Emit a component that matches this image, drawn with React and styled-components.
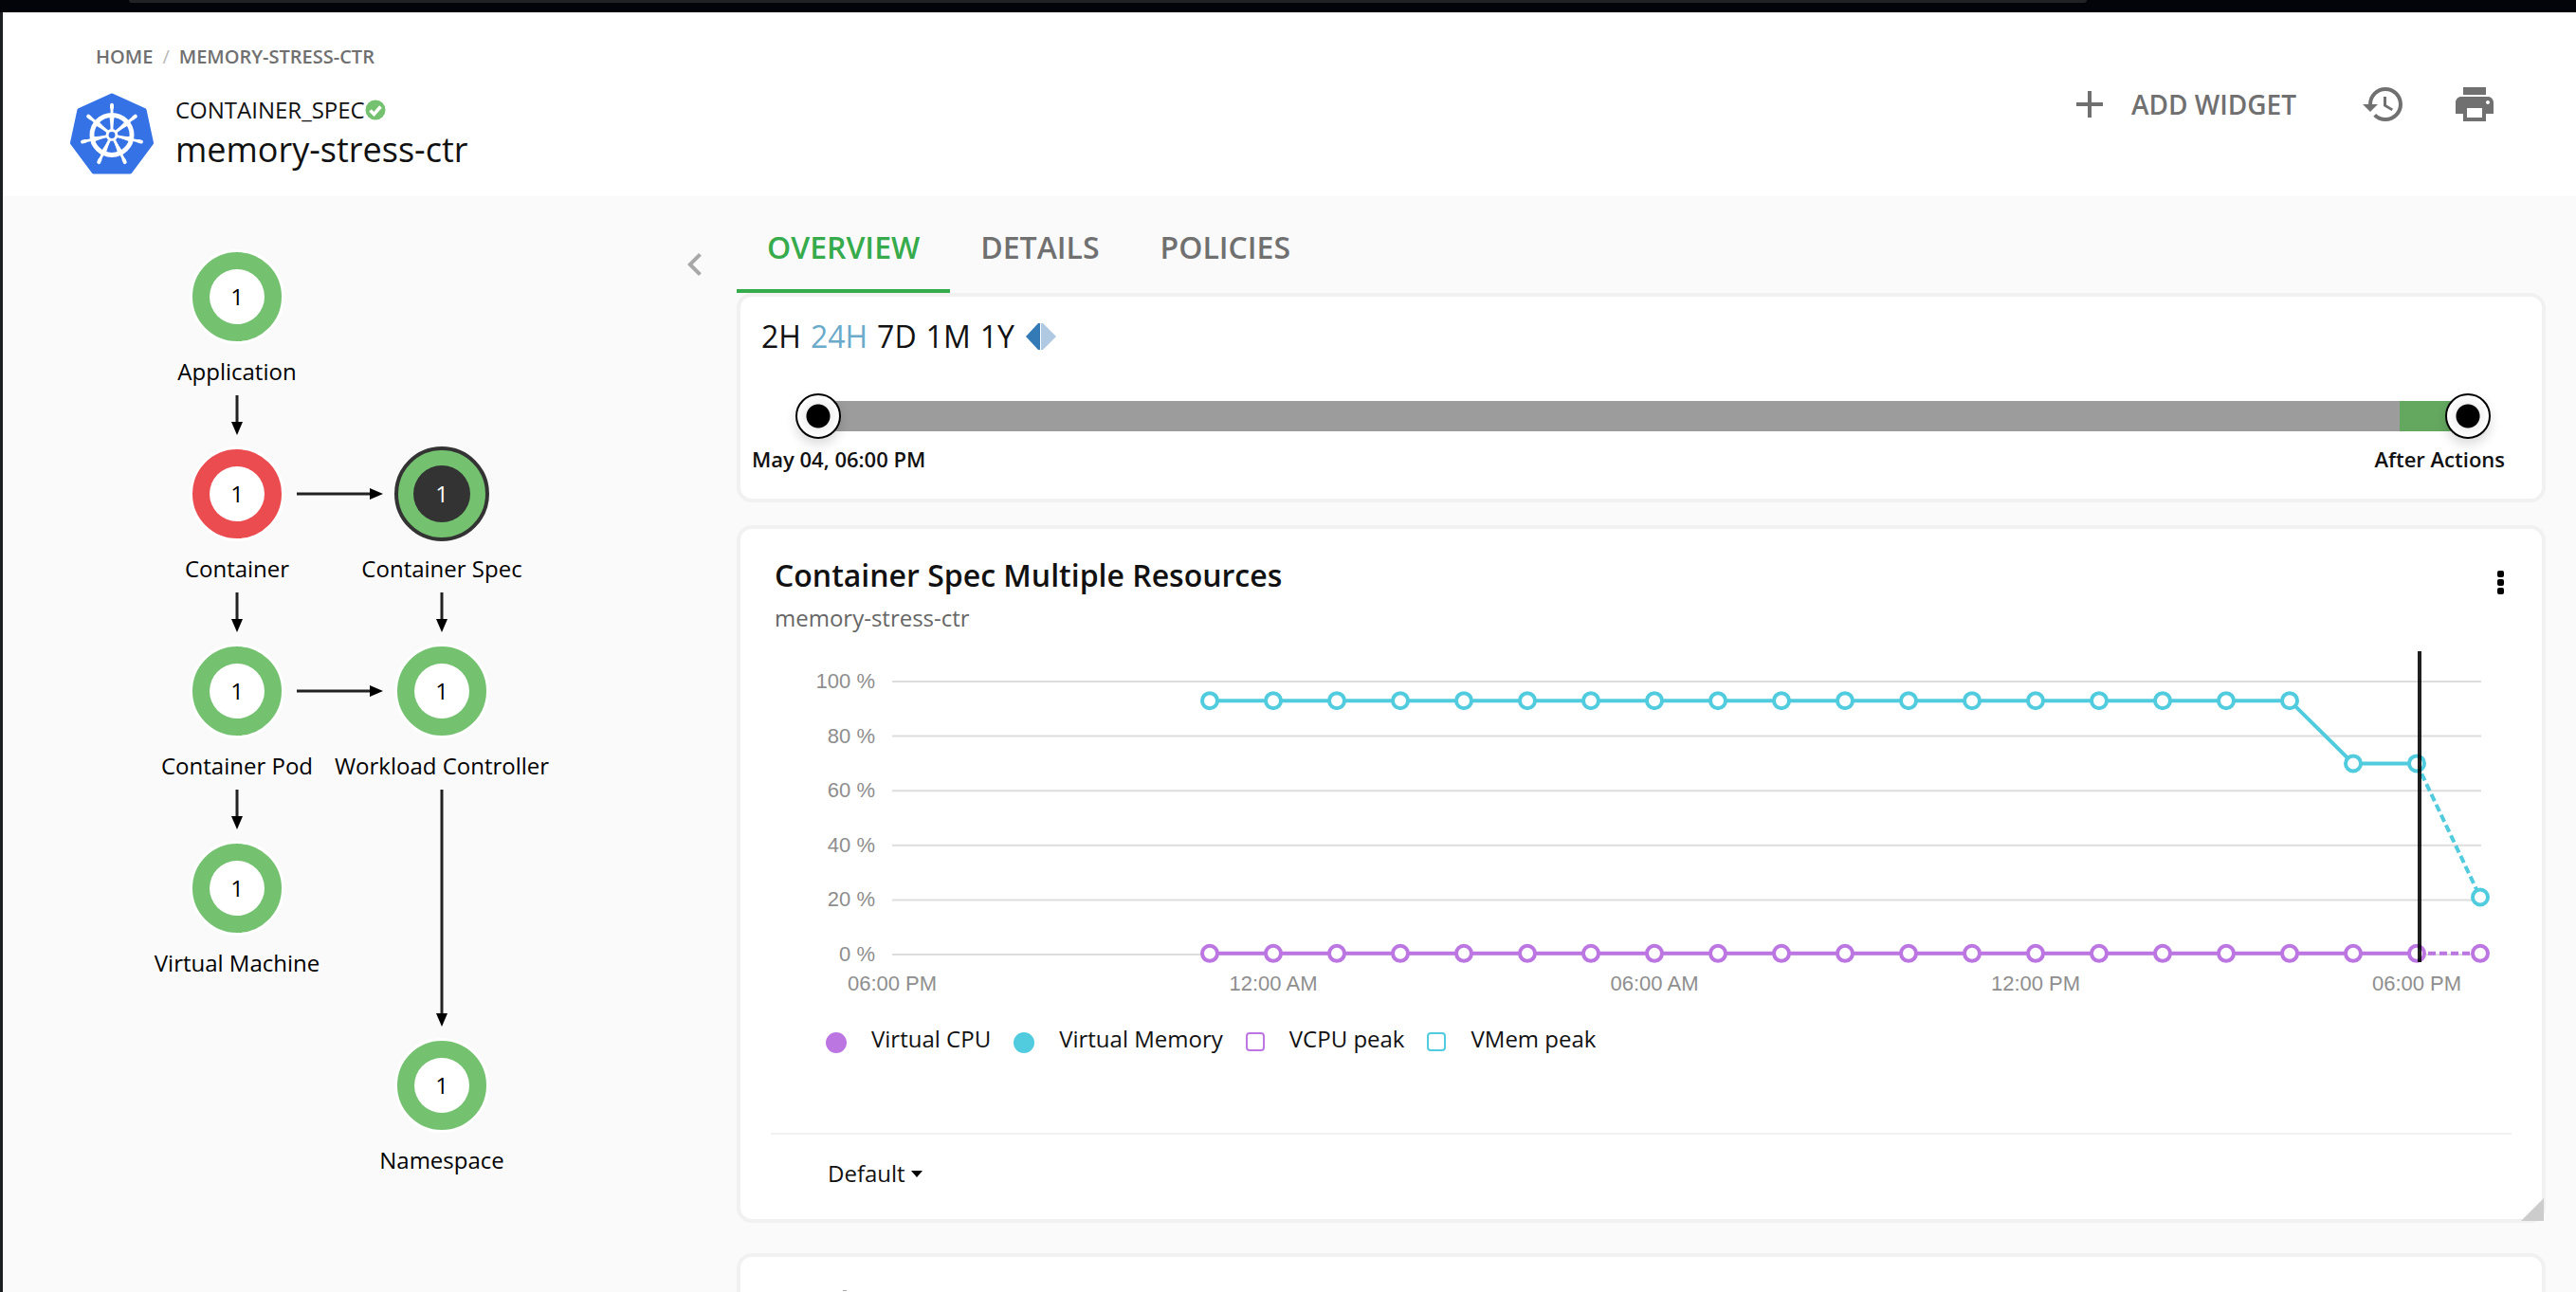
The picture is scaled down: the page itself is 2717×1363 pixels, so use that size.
import React, { useState } from "react";
import styled, { createGlobalStyle, css } from "styled-components";
import { MdAdd, MdHistory, MdPrint, MdChevronLeft } from "react-icons/md";

const color = {
  ink: "#111111",
  muted: "#707070",
  green: "#36ab4c",
  ring: "#74c170",
  red: "#ea4c50",
  dark: "#333333",
  line: "#f1f1f1",
  page: "#fafafa",
  cyan: "#51cbde",
  purple: "#bc76e2",
};

const GlobalStyle = createGlobalStyle`
  *, *::before, *::after { box-sizing: border-box; }
  body { margin: 0; background: ${color.page}; }
  body, button, select { font-family: "Open Sans", "Noto Sans", sans-serif; color: ${color.ink}; }
  button { background: none; border: 0; padding: 0; margin: 0; cursor: pointer; }
  h1, h2, p, ul, ol { margin: 0; padding: 0; }
  ul, ol { list-style: none; }
`;

const Page = styled.div`
  display: flex;
  flex-direction: column;
  height: 100vh;
  overflow: hidden;
`;

const WindowEdge = styled.div`
  flex: none;
  height: 13px;
  padding: 0 19% 0 5%;
  background: #02040a;

  &::before {
    content: "";
    display: block;
    height: 3px;
    border-radius: 0 0 12px 12px;
    background: #202226;
  }
`;

const Shell = styled.div`
  flex: 1;
  min-height: 0;
  display: flex;
  flex-direction: column;
  border-left: 3px solid #1d1e21;
`;

const Header = styled.header`
  flex: none;
  display: flex;
  justify-content: space-between;
  align-items: center;
  padding: 33px 83px 22px 71px;
  background: #ffffff;
`;

const Crumbs = styled.ol`
  display: flex;
  gap: 10px;
  padding-left: 27px;
  margin-bottom: 23px;
  font-size: 20px;
  line-height: 28px;
  font-weight: 600;
  color: #b8b8b8;

  a {
    color: ${color.muted};
    text-decoration: none;
  }
`;

const Slash = styled.li`
  font-weight: 400;
`;

const Identity = styled.div`
  display: flex;
  align-items: center;
  gap: 23px;
`;

const EntityType = styled.p`
  display: flex;
  align-items: center;
  margin-bottom: 2px;
  font-size: 24px;
  line-height: 32px;
`;

const EntityName = styled.h1`
  font-size: 36px;
  line-height: 48px;
  font-weight: 400;
`;

const Actions = styled.div`
  display: flex;
  align-items: center;
  gap: 48px;
  margin-bottom: 12px;
`;

const ActionButton = styled.button`
  display: flex;
  align-items: center;
  gap: 20px;
  margin-right: ${(p) => (p.$wide ? "20px" : 0)};
  color: ${color.muted};
  font-size: 28px;
  line-height: 38px;
  font-weight: 600;
`;

const Body = styled.div`
  flex: 1;
  min-height: 0;
  display: flex;
  background: ${color.page};
`;

const Sidebar = styled.aside`
  flex: none;
  width: 774px;
  display: flex;
  justify-content: space-between;
  align-items: flex-start;
  padding-right: 20px;
`;

const Collapse = styled.button`
  margin-top: 48px;
  color: #a8a8a8;
  line-height: 0;
`;

const Diagram = styled.div`
  position: relative;
  width: 600px;
  height: 1100px;
`;

const Node = styled.button`
  position: absolute;
  left: ${(p) => p.$x - 120}px;
  top: ${(p) => p.$y - 50}px;
  width: 240px;
  display: flex;
  flex-direction: column;
  align-items: center;
  gap: 13px;
  font-size: 24px;
  line-height: 32px;
  color: #000000;
`;

const Ring = styled.span`
  width: 100px;
  height: 100px;
  display: grid;
  place-items: center;
  border: 3px solid #ffffff;
  border-radius: 50%;
  background: ${(p) => p.$color};

  &::before,
  & > span {
    grid-area: 1 / 1;
  }
  &::before {
    content: "";
    width: 58px;
    height: 58px;
    border-radius: 50%;
    background: #ffffff;
  }
  ${(p) =>
    p.$selected &&
    css`
      border: 4px solid ${color.dark};
      color: #ffffff;
      &::before {
        width: 60px;
        height: 60px;
        background: ${color.dark};
      }
    `}
`;

const Main = styled.main`
  flex: 1;
  min-width: 0;
  display: flex;
  flex-direction: column;
  padding-right: 32px;
`;

const Tabs = styled.div`
  flex: none;
  display: flex;
  padding-top: 32px;
`;

const Tab = styled.button`
  padding: 0 32px 22px;
  font-size: 32px;
  line-height: 44px;
  font-weight: 600;
  color: ${(p) => (p.$active ? color.green : color.muted)};
  border-bottom: 4px solid ${(p) => (p.$active ? color.green : "transparent")};
`;

const Card = styled.section`
  position: relative;
  flex: none;
  margin-bottom: ${(p) => p.$gap}px;
  border: 4px solid ${color.line};
  border-radius: 16px;
  background: #ffffff;
`;

const TimeCard = styled(Card)`
  padding: 20px 20px 27px;
`;

const Ranges = styled.div`
  display: flex;
  align-items: center;
  gap: 10px;
  padding-left: 2px;
  margin-bottom: 38px;
`;

const RangeButton = styled.button`
  font-size: 32px;
  line-height: 44px;
  color: ${(p) => (p.$active ? "#6aaacb" : color.ink)};
`;

const DiamondButton = styled.button`
  margin-left: 2px;
  line-height: 0;
`;

const SliderBox = styled.div`
  display: grid;
  align-items: center;
  margin: 0 34px 6px 38px;
`;

const Track = styled.div`
  grid-area: 1 / 1;
  display: flex;
  height: 32px;
  margin: 0 24px;
`;

const Segment = styled.span`
  flex: ${(p) => p.$hours};
  background: ${(p) => p.$color};
`;

const Thumb = styled.input`
  grid-area: 1 / 1;
  appearance: none;
  width: 100%;
  height: 48px;
  margin: 0;
  background: transparent;
  pointer-events: none;

  &::-webkit-slider-thumb {
    appearance: none;
    pointer-events: auto;
    width: 48px;
    height: 48px;
    border: 2px solid #000000;
    border-radius: 50%;
    background: radial-gradient(circle, #000000 12px, #f2f2f2 13px, #ffffff 22px);
    box-shadow: 0 6px 12px rgba(0, 0, 0, 0.14);
  }
`;

const SliderLabels = styled.div`
  display: flex;
  justify-content: space-between;
  margin: 0 19px 0 -8px;
  font-size: 22px;
  line-height: 30px;
  font-weight: 600;
`;

const ChartCard = styled(Card)`
  padding: 27px 32px 32px;
`;

const CardHead = styled.div`
  display: flex;
  justify-content: space-between;
  align-items: flex-start;
  margin-bottom: 8px;
  padding-left: 4px;
`;

const Title = styled.h2`
  margin-bottom: 7px;
  font-size: 32px;
  line-height: 44px;
  font-weight: 600;
`;

const Subtitle = styled.p`
  font-size: 24px;
  line-height: 32px;
  color: #666666;
`;

const Kebab = styled.button`
  display: flex;
  flex-direction: column;
  align-items: center;
  gap: 2px;
  width: 24px;
  margin-top: 17px;

  span {
    width: 7px;
    height: 7px;
    border-radius: 2px;
    background: #000000;
  }
`;

const Plot = styled.svg`
  display: block;
  width: 100%;
  height: auto;

  text {
    font-family: "Liberation Sans", Arial, sans-serif;
    font-size: 22px;
    fill: #8e8e8e;
  }
`;

const Legend = styled.ul`
  display: flex;
  gap: 24px;
  padding: 24px 0 83px 58px;
  font-size: 24px;
  line-height: 32px;
  border-bottom: 2px solid ${color.line};
`;

const LegendItem = styled.li`
  display: flex;
  align-items: flex-start;
  gap: 26px;

  &::before {
    content: "";
    width: ${(p) => (p.$outline ? 20 : 22)}px;
    height: ${(p) => (p.$outline ? 20 : 22)}px;
    margin-top: 9px;
    border: 2px solid ${(p) => p.$color};
    border-radius: ${(p) => (p.$outline ? "4px" : "50%")};
    background: ${(p) => (p.$outline ? "transparent" : p.$color)};
  }
`;

const Footer = styled.div`
  display: flex;
  align-items: center;
  gap: 6px;
  padding: 25px 0 0 60px;
`;

const Picker = styled.select`
  appearance: none;
  field-sizing: content;
  padding: 0;
  border: 0;
  background: none;
  font-size: 24px;
  line-height: 32px;
`;

const Corner = styled.span`
  position: absolute;
  right: -2px;
  bottom: -2px;
  width: 24px;
  height: 24px;
  background: #cccccc;
  clip-path: polygon(100% 0, 100% 100%, 0 100%);
`;

const NextCard = styled(Card)`
  flex: 1 0 36px;
  padding: 35px 108px 0;
  border-bottom: 0;
  border-radius: 16px 16px 0 0;

  &::before {
    content: "";
    display: block;
    width: 4px;
    height: 1px;
    background: #a8a8a8;
  }
`;

const KubernetesLogo = () => {
  const spokes = Array.from({ length: 7 }, (_, i) => (i * 360) / 7);
  return (
    <svg width="88" height="88" viewBox="0 0 90 88" aria-hidden="true">
      <path
        d="M45 3 80 19 87.500 54 64.500 85H25.500L2.500 54 10 19Z"
        fill="#3572e6"
        stroke="#3572e6"
        strokeWidth="5"
        strokeLinejoin="round"
      />
      <g fill="none" stroke="#ffffff" strokeLinecap="round">
        <circle cx="45" cy="45.500" r="21.500" strokeWidth="5" />
        {spokes.map((a) => (
          <g key={a} transform={`rotate(${a} 45 45.500)`}>
            <path d="M45 39V14" strokeWidth="3" />
            <path d="M43 25 45 39 47 25" strokeWidth="1.500" fill="#ffffff" />
            <path d="M45 16V13" strokeWidth="4" />
          </g>
        ))}
        <circle cx="45" cy="45.500" r="5" strokeWidth="3" fill="#3572e6" />
      </g>
    </svg>
  );
};

const CheckBadge = () => (
  <svg width="22" height="22" viewBox="0 0 22 22" aria-label="Normal" role="img">
    <circle cx="11" cy="11" r="10.500" fill={color.ring} />
    <path d="M5.500 11.500 9.500 15.500 16.500 7.500" fill="none" stroke="#fff" strokeWidth="3.500" />
  </svg>
);

const COLS = [247, 463];
const ROWS = [106, 314, 522, 730, 938];

const nodes = [
  { label: "Application", col: 0, row: 0 },
  { label: "Container", col: 0, row: 1, ring: color.red },
  { label: "Container Spec", col: 1, row: 1, selected: true },
  { label: "Container Pod", col: 0, row: 2 },
  { label: "Workload Controller", col: 1, row: 2 },
  { label: "Virtual Machine", col: 0, row: 3 },
  { label: "Namespace", col: 1, row: 4 },
];

const down = [
  { col: 0, from: 0, to: 1 },
  { col: 0, from: 1, to: 2 },
  { col: 1, from: 1, to: 2 },
  { col: 0, from: 2, to: 3 },
  { col: 1, from: 2, to: 4 },
];

const across = [1, 2];

function SupplyChain() {
  return (
    <Diagram>
      <svg width="600" height="1100" aria-hidden="true">
        {down.map(({ col, from, to }) => {
          const x = COLS[col];
          const end = ROWS[to] - 62;
          return (
            <g key={`${col}-${from}`}>
              <path d={`M${x} ${ROWS[from] + 104}V${end - 12}`} stroke="#222222" strokeWidth="3" />
              <path d={`M${x - 6} ${end - 14}H${x + 6}L${x} ${end}Z`} />
            </g>
          );
        })}
        {across.map((row) => {
          const y = ROWS[row];
          return (
            <g key={row}>
              <path d={`M${COLS[0] + 63} ${y}H${COLS[1] - 74}`} stroke="#222222" strokeWidth="3" />
              <path d={`M${COLS[1] - 76} ${y - 6}V${y + 6}L${COLS[1] - 62} ${y}Z`} />
            </g>
          );
        })}
      </svg>
      {nodes.map((n) => (
        <Node key={n.label} $x={COLS[n.col]} $y={ROWS[n.row]}>
          <Ring $color={n.ring || color.ring} $selected={n.selected}>
            <span>1</span>
          </Ring>
          {n.label}
        </Node>
      ))}
    </Diagram>
  );
}

const LEFT = 128;
const STEP = 67;
const TOP = 43;
const BOTTOM = 331;
const px = (hour) => LEFT + hour * STEP;
const py = (pct) => BOTTOM - (pct * (BOTTOM - TOP)) / 100;

const hours = Array.from({ length: 21 }, (_, i) => i + 5);
const memory = hours.map((h) => (h < 23 ? 93 : h < 25 ? 70 : 21));
const cpu = hours.map(() => 0.4);

function Series({ values, stroke }) {
  const pts = values.map((v, i) => [px(hours[i]), py(v)]);
  const solid = pts.slice(0, -1);
  return (
    <g fill="none" stroke={stroke} strokeWidth="4">
      <polyline points={solid.join(" ")} />
      <polyline points={pts.slice(-2).join(" ")} strokeDasharray="8 4" />
      {pts.map(([x, y]) => (
        <circle key={x} cx={x} cy={y} r="8" fill="#ffffff" />
      ))}
    </g>
  );
}

const ticks = ["06:00 PM", "12:00 AM", "06:00 AM", "12:00 PM", "06:00 PM"];

function ResourceChart() {
  return (
    <Plot viewBox="0 0 1836 380" role="img" aria-label="Virtual CPU and memory utilization">
      {[100, 80, 60, 40, 20, 0].map((pct) => (
        <g key={pct}>
          <path d={`M${LEFT} ${py(pct)}H${px(25) + 1}`} stroke="#dddddd" strokeWidth="2" />
          <text x={LEFT - 18} y={py(pct) + 7} textAnchor="end">
            {pct} %
          </text>
        </g>
      ))}
      {ticks.map((t, i) => (
        <text key={i} x={px(i * 6)} y="369" textAnchor="middle">
          {t}
        </text>
      ))}
      <Series values={cpu} stroke={color.purple} />
      <Series values={memory} stroke={color.cyan} />
      <path d="M1739 11V339" stroke="#000000" strokeOpacity="0.88" strokeWidth="4" />
    </Plot>
  );
}

export default function App() {
  const [tab, setTab] = useState("OVERVIEW");
  const [range, setRange] = useState("24H");
  const [span, setSpan] = useState([0, 24]);

  return (
    <Page>
      <GlobalStyle />
      <WindowEdge />
      <Shell>
        <Header>
          <div>
            <Crumbs>
              <li>
                <a href="#home">HOME</a>
              </li>
              <Slash>/</Slash>
              <li>
                <a href="#memory-stress-ctr">MEMORY-STRESS-CTR</a>
              </li>
            </Crumbs>
            <Identity>
              <KubernetesLogo />
              <div>
                <EntityType>
                  CONTAINER_SPEC
                  <CheckBadge />
                </EntityType>
                <EntityName>memory-stress-ctr</EntityName>
              </div>
            </Identity>
          </div>
          <Actions>
            <ActionButton $wide>
              <MdAdd size={48} />
              ADD WIDGET
            </ActionButton>
            <ActionButton aria-label="History">
              <MdHistory size={48} />
            </ActionButton>
            <ActionButton aria-label="Print">
              <MdPrint size={48} />
            </ActionButton>
          </Actions>
        </Header>
        <Body>
          <Sidebar>
            <SupplyChain />
            <Collapse aria-label="Collapse">
              <MdChevronLeft size={48} />
            </Collapse>
          </Sidebar>
          <Main>
            <Tabs role="tablist">
              {["OVERVIEW", "DETAILS", "POLICIES"].map((t) => (
                <Tab
                  key={t}
                  role="tab"
                  aria-selected={t === tab}
                  $active={t === tab}
                  onClick={() => setTab(t)}
                >
                  {t}
                </Tab>
              ))}
            </Tabs>
            <TimeCard $gap={24}>
              <Ranges>
                {["2H", "24H", "7D", "1M", "1Y"].map((r) => (
                  <RangeButton key={r} $active={r === range} onClick={() => setRange(r)}>
                    {r}
                  </RangeButton>
                ))}
                <DiamondButton aria-label="Toggle projection">
                  <svg width="32" height="28" viewBox="0 0 32 28">
                    <path d="M0 14 13 0H15V28H13Z" fill="#337ab7" />
                    <path d="M32 14 18 0H16V28H18Z" fill="#b0c9e2" />
                  </svg>
                </DiamondButton>
              </Ranges>
              <SliderBox>
                <Track>
                  <Segment $hours={23} $color="#9c9c9c" />
                  <Segment $hours={1} $color="#64a860" />
                </Track>
                <Thumb
                  type="range"
                  min="0"
                  max="24"
                  value={span[0]}
                  aria-label="Start time"
                  onChange={(e) => setSpan([+e.target.value, span[1]])}
                />
                <Thumb
                  type="range"
                  min="0"
                  max="24"
                  value={span[1]}
                  aria-label="End time"
                  onChange={(e) => setSpan([span[0], +e.target.value])}
                />
              </SliderBox>
              <SliderLabels>
                <span>May 04, 06:00 PM</span>
                <span>After Actions</span>
              </SliderLabels>
            </TimeCard>
            <ChartCard $gap={32}>
              <CardHead>
                <div>
                  <Title>Container Spec Multiple Resources</Title>
                  <Subtitle>memory-stress-ctr</Subtitle>
                </div>
                <Kebab aria-label="Widget menu">
                  <span />
                  <span />
                  <span />
                </Kebab>
              </CardHead>
              <ResourceChart />
              <Legend>
                <LegendItem $color={color.purple}>Virtual CPU</LegendItem>
                <LegendItem $color={color.cyan}>Virtual Memory</LegendItem>
                <LegendItem $color={color.purple} $outline>
                  VCPU peak
                </LegendItem>
                <LegendItem $color={color.cyan} $outline>
                  VMem peak
                </LegendItem>
              </Legend>
              <Footer>
                <Picker aria-label="Commodities">
                  <option>Default</option>
                </Picker>
                <svg width="12" height="7" viewBox="0 0 12 7" aria-hidden="true">
                  <path d="M0 0H12L6 7Z" />
                </svg>
              </Footer>
              <Corner />
            </ChartCard>
            <NextCard />
          </Main>
        </Body>
      </Shell>
    </Page>
  );
}
